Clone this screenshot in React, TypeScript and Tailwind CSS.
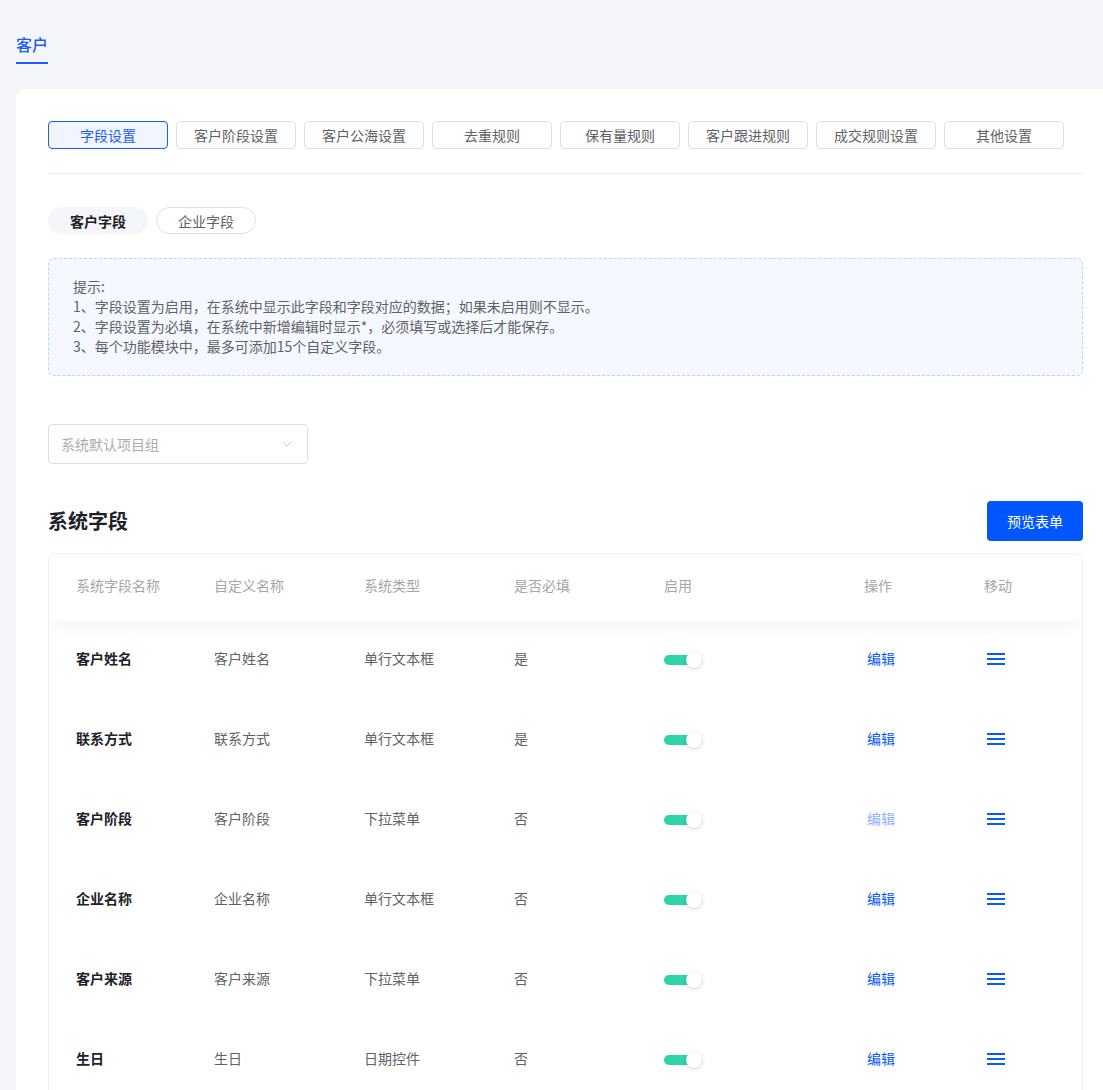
import { ChevronDown } from 'lucide-react'

const topTabs = ['字段设置', '客户阶段设置', '客户公海设置', '去重规则', '保有量规则', '客户跟进规则', '成交规则设置', '其他设置']

const tips = [
  '提示:',
  '1、字段设置为启用，在系统中显示此字段和字段对应的数据；如果未启用则不显示。',
  '2、字段设置为必填，在系统中新增编辑时显示*，必须填写或选择后才能保存。',
  '3、每个功能模块中，最多可添加15个自定义字段。',
]

const rows = [
  { name: '客户姓名', custom: '客户姓名', type: '单行文本框', required: '是' },
  { name: '联系方式', custom: '联系方式', type: '单行文本框', required: '是' },
  { name: '客户阶段', custom: '客户阶段', type: '下拉菜单', required: '否', dim: true },
  { name: '企业名称', custom: '企业名称', type: '单行文本框', required: '否' },
  { name: '客户来源', custom: '客户来源', type: '下拉菜单', required: '否' },
  { name: '生日', custom: '生日', type: '日期控件', required: '否' },
]

const Switch = () => (
  <div className="relative mt-[3px] h-4 w-[38px]">
    <div className="absolute left-0 top-[3px] h-[10px] w-[33px] rounded-full bg-[#2ed3a7]" />
    <div className="absolute right-0 top-0 h-4 w-4 rounded-full bg-white shadow-[0_1px_4px_rgba(0,0,0,0.18)]" />
  </div>
)

const MoveIcon = () => (
  <div className="mt-[1px] flex w-[18px] flex-col gap-[3px]">
    <div className="h-[2px] bg-[#0a56ff]" />
    <div className="h-[2px] bg-[#0a56ff]" />
    <div className="h-[2px] bg-[#0a56ff]" />
  </div>
)

export default function App() {
  return (
    <div className="h-[1090px] overflow-hidden bg-[#f5f6fa] font-['Noto_Sans_CJK_SC',sans-serif]">
      {/* page tab */}
      <div className="pl-4 pt-[32px]">
        <div className="inline-block border-b-2 border-[#1a5cff] pb-[6px] text-base leading-6 font-medium text-[#1a5cff]">
          客户
        </div>
      </div>

      <div className="ml-4 mt-[25px] w-[1099px] rounded-tl-[10px] bg-white px-8 pt-8">
        <div className="w-[1035px]">
          {/* settings tabs */}
          <div className="flex gap-2">
            {topTabs.map((t, i) => (
              <div
                key={t}
                className={
                  i === 0
                    ? 'flex h-7 w-[120px] items-center justify-center rounded border border-[#1a5cff] bg-[#f0f5ff] pb-px text-sm text-[#1a5cff]'
                    : 'flex h-7 w-[120px] items-center justify-center rounded border border-[#dcdfe6] pb-px text-sm text-[#5e6266]'
                }
              >
                {t}
              </div>
            ))}
          </div>
          <div className="mt-6 h-px bg-[#ebeef5]" />

          {/* field type pills */}
          <div className="mt-[33px] flex gap-2">
            <div className="flex h-[27px] w-[100px] items-center justify-center rounded-full bg-[#f5f6fa] text-sm font-bold text-[#1d2129]">
              客户字段
            </div>
            <div className="flex h-[27px] w-[100px] items-center justify-center rounded-full border border-[#dcdfe6] text-sm text-[#5e6266]">
              企业字段
            </div>
          </div>

          {/* tips */}
          <div className="mt-6 rounded-md border border-dashed border-[#bcd4f5] bg-[#f5f9ff] pb-[19px] pl-6 pt-[17px] text-sm leading-5 text-[#5e6266]">
            {tips.map((t) => (
              <div key={t}>{t}</div>
            ))}
          </div>

          {/* group select */}
          <div className="mt-12 flex h-10 w-[260px] items-center justify-between rounded border border-[#dcdfe6] px-3">
            <span className="pb-px text-sm text-[#a8abb2]">系统默认项目组</span>
            <ChevronDown className="h-4 w-4 text-[#c0c4cc]" strokeWidth={1.5} />
          </div>

          {/* section header */}
          <div className="mt-[37px] flex h-10 items-center justify-between">
            <h2 className="text-xl font-bold text-[#1d2129]">系统字段</h2>
            <button className="h-10 w-24 rounded bg-[#0256ff] pb-px text-sm text-white">预览表单</button>
          </div>

          {/* table */}
          <div className="mt-3 overflow-hidden rounded-t-lg border border-[#ebeef5] text-sm">
            <div className="relative z-10 flex h-[67px] items-center bg-white pb-[5px] pl-[27px] text-[#a3a6ad] shadow-[0_8px_14px_-4px_rgba(0,0,0,0.06)]">
              <div className="w-[138px]">系统字段名称</div>
              <div className="w-[150px]">自定义名称</div>
              <div className="w-[150px]">系统类型</div>
              <div className="w-[150px]">是否必填</div>
              <div className="w-[200px]">启用</div>
              <div className="w-[120px]">操作</div>
              <div>移动</div>
            </div>
            {rows.map((r) => (
              <div key={r.name} className="flex h-20 items-center pb-[6px] pl-[27px] text-[#5e6266]">
                <div className="w-[138px] font-bold text-[#1d2129]">{r.name}</div>
                <div className="w-[150px]">{r.custom}</div>
                <div className="w-[150px]">{r.type}</div>
                <div className="w-[150px]">{r.required}</div>
                <div className="w-[200px]">
                  <Switch />
                </div>
                <div className="w-[120px] pl-[3px]">
                  <span className={r.dim ? 'text-[#8cb0ff]' : 'text-[#0a56ff]'}>编辑</span>
                </div>
                <div className="pl-[3px]">
                  <MoveIcon />
                </div>
              </div>
            ))}
          </div>
        </div>
      </div>
    </div>
  )
}
